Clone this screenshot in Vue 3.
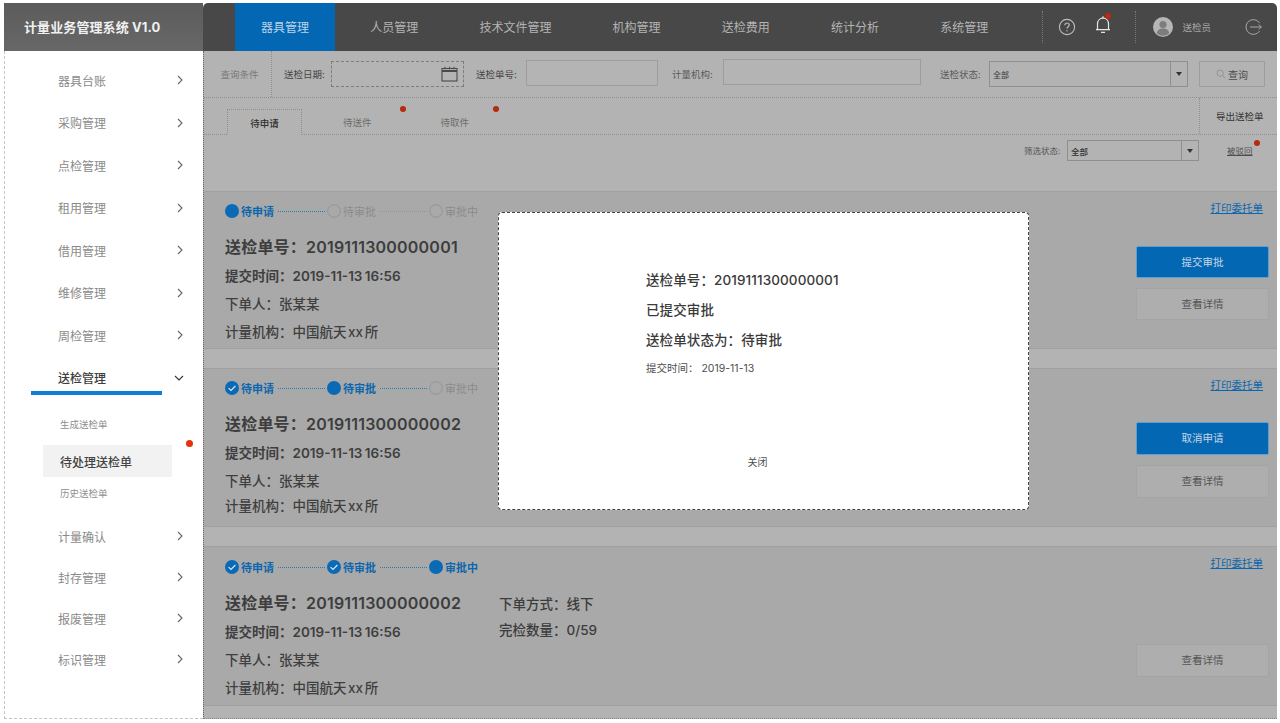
<script setup>
const menusTop = ['器具台账', '采购管理', '点检管理', '租用管理', '借用管理', '维修管理', '周检管理']
const menusBottom = ['计量确认', '封存管理', '报废管理', '标识管理']
const navs = ['器具管理', '人员管理', '技术文件管理', '机构管理', '送检费用', '统计分析', '系统管理']
const stepNames = ['待申请', '待审批', '审批中']

const cards = [
  { no: '2019111300000001', state: ['now', 'off', 'off'], lines: ['on', 'off'], action: '提交审批', rows: 'a', extra: false },
  { no: '2019111300000002', state: ['done', 'now', 'off'], lines: ['on', 'on'], action: '取消申请', rows: 'b', extra: false },
  { no: '2019111300000002', state: ['done', 'done', 'now'], lines: ['on', 'on'], action: '', rows: 'c', extra: true }
]
</script>

<template>
  <div class="page">
    <header class="top">
      <div class="logo">计量业务管理系统 V1.0</div>
      <div class="nav">
        <a v-for="(n, i) in navs" :key="n" class="nav-item" :class="{ active: i === 0 }">{{ n }}</a>
        <div class="tools">
          <svg class="ic-help" width="18" height="18" viewBox="0 0 18 18" fill="none" stroke="#bdbdbd">
            <circle cx="9" cy="9" r="7.6" stroke-width="1.1" />
            <path d="M6.8 7.2c0-1.4 1-2.2 2.2-2.2s2.2.8 2.2 2c0 1.700-2.200 1.700-2.200 3.600" stroke-width="1.200" />
            <circle cx="9" cy="12.800" r=".7" fill="#bdbdbd" stroke="none" />
          </svg>
          <span class="bell">
            <svg width="16" height="20" viewBox="0 0 16 20" fill="none" stroke="#e6e6e6" stroke-width="1.200">
              <path d="M2.500 14.500V9c0-3.400 2.200-5.800 5.500-5.800s5.500 2.400 5.500 5.800v5.500" />
              <path d="M1 14.700h14M6 17.300h4" />
              <path d="M8 1.200v2" />
            </svg>
            <i class="bell-dot"></i>
          </span>
          <span class="avatar">
            <svg width="20" height="20" viewBox="0 0 20 20">
              <circle cx="10" cy="10" r="10" fill="#b5b5b5" />
              <circle cx="10" cy="7.500" r="3.600" fill="#7d7d7d" />
              <path d="M3.800 16c.6-3.400 3-4.600 6.200-4.600s5.600 1.200 6.200 4.600c-1.600 1.700-3.800 2.700-6.200 2.700S5.400 17.700 3.800 16z" fill="#7d7d7d" />
            </svg>
          </span>
          <span class="user">送检员</span>
          <svg class="ic-out" width="18" height="18" viewBox="0 0 18 18" fill="none" stroke="#a8a8a8" stroke-width="1">
            <path d="M15.600 5A7.400 7.400 0 1 0 15.600 13" />
            <path d="M6 9h11.500M14.800 6.500 17.300 9l-2.500 2.500" />
          </svg>
        </div>
      </div>
    </header>

    <div class="body">
      <aside class="side">
        <div v-for="m in menusTop" :key="m" class="menu">
          <span>{{ m }}</span>
          <svg class="chev" width="8" height="10" viewBox="0 0 8 10" fill="none" stroke="#666" stroke-width="1.100"><path d="M2 1l4 4-4 4" /></svg>
        </div>
        <div class="menu open">
          <span>送检管理</span>
          <svg class="chev" width="10" height="8" viewBox="0 0 10 8" fill="none" stroke="#333" stroke-width="1.100"><path d="M1 2l4 4 4-4" /></svg>
        </div>
        <div class="subs">
          <div class="sub">生成送检单</div>
          <div class="sub cur">待处理送检单<i class="side-dot"></i></div>
          <div class="sub last">历史送检单</div>
        </div>
        <div v-for="m in menusBottom" :key="m" class="menu low">
          <span>{{ m }}</span>
          <svg class="chev" width="8" height="10" viewBox="0 0 8 10" fill="none" stroke="#666" stroke-width="1.100"><path d="M2 1l4 4-4 4" /></svg>
        </div>
      </aside>

      <main class="main">
        <div class="query">
          <div class="q-title">查询条件</div>
          <label class="q-label first">送检日期:</label>
          <div class="q-input date">
            <svg width="17" height="16" viewBox="0 0 17 16" fill="none" stroke="#4a4a4a">
              <rect x="1" y="2.500" width="15" height="12.500" stroke-width="1.100" />
              <path d="M1 5h15" stroke-width="2" />
              <path d="M4 .8v2.400M8.500 .8v2.400M13 .8v2.400" stroke-width="1" />
            </svg>
          </div>
          <label class="q-label l2">送检单号:</label>
          <div class="q-input no"></div>
          <label class="q-label l3">计量机构:</label>
          <div class="q-input org"></div>
          <label class="q-label l4">送检状态:</label>
          <div class="select q-select"><span>全部</span><b class="arrow"></b></div>
          <div class="q-btn">
            <svg width="10" height="10" viewBox="0 0 10 10" fill="none" stroke="#8b8b8b" stroke-width=".8"><circle cx="4.200" cy="4.200" r="3.200" /><path d="M6.600 6.600 9 9" /></svg>
            查询
          </div>
        </div>

        <div class="tabs">
          <div class="tab active">待申请</div>
          <div class="tab t2">待送件<i class="dot"></i></div>
          <div class="tab t3">待取件<i class="dot"></i></div>
          <div class="export">导出送检单</div>
        </div>

        <div class="filter">
          <span class="f-label">筛选状态:</span>
          <div class="select f-select"><span>全部</span><b class="arrow"></b></div>
          <a class="reject">被驳回<i class="dot"></i></a>
        </div>

        <section v-for="(c, i) in cards" :key="i" class="card" :class="'card-' + c.rows">
          <div class="steps">
            <template v-for="(s, k) in stepNames" :key="s">
              <span v-if="k > 0" class="line" :class="c.lines[k - 1]"></span>
              <span class="step" :class="c.state[k]">
                <svg width="14" height="14" viewBox="0 0 14 14">
                  <template v-if="c.state[k] === 'off'">
                    <circle cx="7" cy="7" r="6.300" fill="none" stroke="#8f8f8f" stroke-width=".8" />
                  </template>
                  <template v-else>
                    <circle cx="7" cy="7" r="7" fill="#0b6ab5" />
                    <path v-if="c.state[k] === 'done'" d="M3.600 7.200l2.400 2.300 4.400-4.500" fill="none" stroke="#dfe9f2" stroke-width="1.100" />
                  </template>
                </svg>
                <em>{{ s }}</em>
              </span>
            </template>
          </div>

          <div class="no">送检单号：{{ c.no }}</div>
          <div class="row time">提交时间：2019-11-13 16:56</div>
          <div class="row who">下单人：张某某</div>
          <div class="row org-name">计量机构：中国航天 xx 所</div>

          <div v-if="c.extra" class="extra">
            <div>下单方式：线下</div>
            <div>完检数量：0/59</div>
          </div>

          <div class="ops">
            <a class="print">打印委托单</a>
            <div class="btns">
              <div v-if="c.action" class="btn primary">{{ c.action }}</div>
              <div class="btn">查看详情</div>
            </div>
          </div>
        </section>

        <div class="tail"></div>

        <div class="modal">
          <p class="m-line first">送检单号：2019111300000001</p>
          <p class="m-line">已提交审批</p>
          <p class="m-line">送检单状态为：待审批</p>
          <p class="m-time">提交时间： 2019-11-13</p>
          <div class="m-close">关闭</div>
        </div>
      </main>
    </div>
  </div>
</template>

<style>
html, body { margin: 0; background: #fff; }
</style>

<style scoped>
.page {
  width: 1280px;
  height: 723px;
  box-sizing: border-box;
  padding: 3px 3px 4px 4px;
  display: flex;
  flex-direction: column;
  overflow: hidden;
  background: #fff;
  font-family: Inter, "Noto Sans CJK SC", sans-serif;
  color: #3c3c3c;
}
.top { display: flex; height: 48px; flex: none; }
.logo {
  width: 199px;
  box-sizing: border-box;
  padding-left: 20px;
  line-height: 48px;
  font-size: 13px;
  font-weight: 700;
  letter-spacing: .1px;
  color: #f0f0f0;
  background: linear-gradient(#5c5c5c, #676767);
}
.nav {
  flex: 1;
  display: flex;
  gap: 9.200px;
  padding-left: 32px;
  background: #484848;
  border-radius: 5px 5px 0 0;
}
.nav-item {
  padding: 0 26px;
  line-height: 49px;
  font-size: 12px;
  color: #b4b4b4;
  white-space: nowrap;
}
.nav-item.active { background: #0467b4; color: #bcd3e6; }
.tools { flex: 1; display: flex; align-items: center; margin-left: 19px; position: relative; height: 100%; }
.tools::before, .tools::after {
  content: '';
  position: absolute;
  top: 8px;
  height: 32px;
  border-left: 1px dotted #777;
}
.tools::before { left: 0; }
.tools::after { left: 93px; }
.ic-help { margin-left: 16px; }
.bell { position: relative; margin-left: 19px; height: 20px; margin-top: -4px; }
.bell-dot { position: absolute; left: 10px; top: -2px; width: 6px; height: 6px; border-radius: 50%; background: #c4250c; }
.avatar { margin-left: 42px; height: 20px; }
.user { margin-left: 9px; font-size: 9.500px; color: #a6a6a6; white-space: nowrap; }
.ic-out { margin-left: 33px; }

.body { flex: 1; display: flex; min-height: 0; }
.side {
  width: 199px;
  box-sizing: border-box;
  flex: none;
  padding-top: 8px;
  border-left: 1px dashed #c4c4c4;
  border-bottom: 1px dashed #c4c4c4;
  background: #fff;
}
.menu {
  height: 42.500px;
  display: flex;
  align-items: center;
  justify-content: space-between;
  padding: 0 19px 0 53px;
  font-size: 12px;
  color: #8a8a8a;
}
.menu.low { height: 41px; }
.menu.open { color: #3d3d3d; font-weight: 500; margin: 4px 41px 0 26px; padding: 4px 0 0 27px; height: 26px; border-bottom: 4px solid #0d7fd8; width: 104px; }
.menu.open .chev { margin-right: -22px; }
.subs { padding: 14px 0 9px 38px; }
.sub { height: 32px; line-height: 32px; padding-left: 17px; font-size: 9.500px; color: #8f8f8f; width: 112px; position: relative; }
.sub.cur { background: #f2f2f2; font-size: 12px; line-height: 36px; color: #444; font-weight: 500; margin: 4px 0 0; }
.sub.last { height: 30px; line-height: 34px; }
.side-dot { position: absolute; left: 143px; top: -5px; width: 7px; height: 7px; border-radius: 50%; background: #e6300f; }

.main {
  flex: 1;
  position: relative;
  background: #b3b3b3;
  border-left: 1px dotted #666;
  border-bottom: 1px dotted #888;
  display: flex;
  flex-direction: column;
  min-width: 0;
}
.query {
  height: 46px;
  flex: none;
  display: flex;
  align-items: center;
  border-bottom: 1px dotted #8e8e8e;
  font-size: 9.500px;
}
.q-title { width: 68px; align-self: stretch; display: flex; align-items: center; justify-content: center; padding-left: 4px; color: #7a7a7a; border-right: 1px dotted #8e8e8e; font-size: 9.500px; box-sizing: border-box; }
.q-label { color: #464646; white-space: nowrap; }
.q-label.first { margin-left: 12px; width: 47px; }
.q-label.l2 { margin-left: 12px; width: 50px; }
.q-label.l3 { margin-left: 14px; width: 51px; color: #5a5a5a; }
.q-label.l4 { margin-left: 19px; width: 49px; color: #5a5a5a; }
.q-input { height: 26px; box-sizing: border-box; border: 1px solid #9d9d9d; background: #b4b4b4; }
.q-input.date { width: 133px; border: 1px dashed #7d7d7d; display: flex; align-items: center; justify-content: flex-end; padding-right: 5px; }
.q-input.no { width: 132px; margin-top: -2px; }
.q-input.org { width: 198px; margin-top: -4px; }
.select { box-sizing: border-box; border: 1px solid #8f8f8f; display: flex; align-items: center; justify-content: space-between; position: relative; color: #333; }
.select span { padding-left: 3px; }
.arrow { display: block; width: 16px; height: 100%; border-left: 1px solid #8f8f8f; position: relative; }
.arrow::after { content: ''; position: absolute; left: 5px; top: 50%; margin-top: -2px; border: 3px solid transparent; border-top: 4px solid #333; border-bottom: 0; }
.q-select { width: 199px; height: 26px; font-size: 8px; }
.q-btn { width: 66px; height: 26px; margin-left: 11px; box-sizing: border-box; border: 1px solid #9d9d9d; display: flex; align-items: center; justify-content: center; gap: 2px; color: #4d4d4d; font-size: 10px; }

.tabs { height: 37px; flex: none; display: flex; position: relative; border-bottom: 1px dotted #8e8e8e; font-size: 9.500px; box-sizing: border-box; }
.tab { line-height: 24px; padding-top: 13px; color: #6d6d6d; position: relative; }
.tab.active { margin-left: 23px; margin-top: 11px; padding-top: 2px; width: 75px; height: 26px; box-sizing: border-box; text-align: center; color: #303030; font-weight: 500; background: #b3b3b3; border: 1px dotted #8e8e8e; border-bottom: 1px solid #b3b3b3; }
.tab.t2 { margin-left: 41px; }
.tab.t3 { margin-left: 69px; }
.tab .dot { left: 57px; top: 8px; }
.tab.t3 .dot { left: 52px; }
.dot { position: absolute; width: 6px; height: 6px; border-radius: 50%; background: #b52a10; }
.export { position: absolute; right: 0; top: 0; bottom: 0; width: 78px; box-sizing: border-box; padding-left: 16px; line-height: 38px; border-left: 1px dotted #8e8e8e; font-size: 9.500px; color: #333; white-space: nowrap; }

.filter { height: 56px; flex: none; position: relative; display: flex; font-size: 8.500px; color: #555; }
.f-label { position: absolute; left: 820px; top: 9px; }
.f-select { position: absolute; left: 863px; top: 5px; width: 132px; height: 21px; font-size: 8.500px; font-weight: 500; }
.reject { position: absolute; left: 1023px; top: 9px; color: #4d4d4d; text-decoration: underline; }
.reject .dot { left: 27px; top: -4px; }

.card {
  height: 158px;
  flex: none;
  box-sizing: border-box;
  margin-bottom: 19px;
  background: #a9a9a9;
  border-top: 1px solid #a0a0a0;
  border-bottom: 1px solid #a0a0a0;
  position: relative;
  padding-left: 21px;
}
.card-b { height: 159px; }
.card-c { height: 160px; margin-bottom: 0; }
.steps { display: flex; align-items: center; height: 14px; margin-top: 12px; }
.card-c .steps { margin-top: 13px; }
.step { display: flex; align-items: center; gap: 2px; font-size: 11px; }
.step svg { flex: none; }
.step em { font-style: normal; font-weight: 600; color: #0b66ad; white-space: nowrap; }
.step.off em { color: #8b8b8b; font-weight: 400; }
.line { width: 47px; margin: 0 2px 0 4px; border-top: 1px dotted #2f79b3; }
.line.off { border-top-color: #939393; }
.no { margin-top: 18px; font-size: 16px; letter-spacing: .2px; line-height: 22px; font-weight: 600; color: #3d3d3d; white-space: nowrap; }
.row { font-size: 13.500px; line-height: 20px; color: #3f3f3f; white-space: nowrap; font-weight: 500; }
.time { margin-top: 8px; font-weight: 600; word-spacing: -1px; }
.who { margin-top: 8px; }
.org-name { margin-top: 8px; word-spacing: -2px; }
.card-b .org-name { margin-top: 5px; }
.extra { position: absolute; left: 295px; top: 47px; font-size: 13.500px; line-height: 20px; font-weight: 500; }
.extra div + div { margin-top: 6px; }

.ops { position: absolute; right: 8px; top: 0; bottom: 0; }
.print { position: absolute; right: 6px; top: 8px; font-size: 10.500px; color: #0b66ad; text-decoration: underline; white-space: nowrap; }
.btns { position: absolute; right: 0; bottom: 28px; width: 133px; display: flex; flex-direction: column; gap: 10px; }
.btn { height: 33px; box-sizing: border-box; line-height: 31px; text-align: center; font-size: 10.500px; color: #555; background: #aeaeae; border: 1px solid #a4a4a4; border-radius: 2px; }
.card-a .btn { height: 32px; line-height: 32px; }
.btn.primary { background: #0467b4; border-color: #5f9dce; color: #c6d7e6; }

.tail { flex: 1; }

.modal {
  position: absolute;
  left: 294px;
  top: 161px;
  width: 531px;
  height: 298px;
  box-sizing: border-box;
  padding: 57px 0 0 147px;
  background: #fff;
  border: 1px dashed #444;
  border-radius: 4px;
}
.m-line { margin: 0 0 10px; font-size: 13.500px; line-height: 20px; font-weight: 500; color: #3a3a3a; letter-spacing: .1px; }
.m-time { margin: 1px 0 0; font-size: 10.500px; line-height: 18px; color: #4f4f4f; }
.m-close { position: absolute; left: 0; right: 12px; bottom: 40px; text-align: center; font-size: 10px; color: #4f4f4f; }
</style>
